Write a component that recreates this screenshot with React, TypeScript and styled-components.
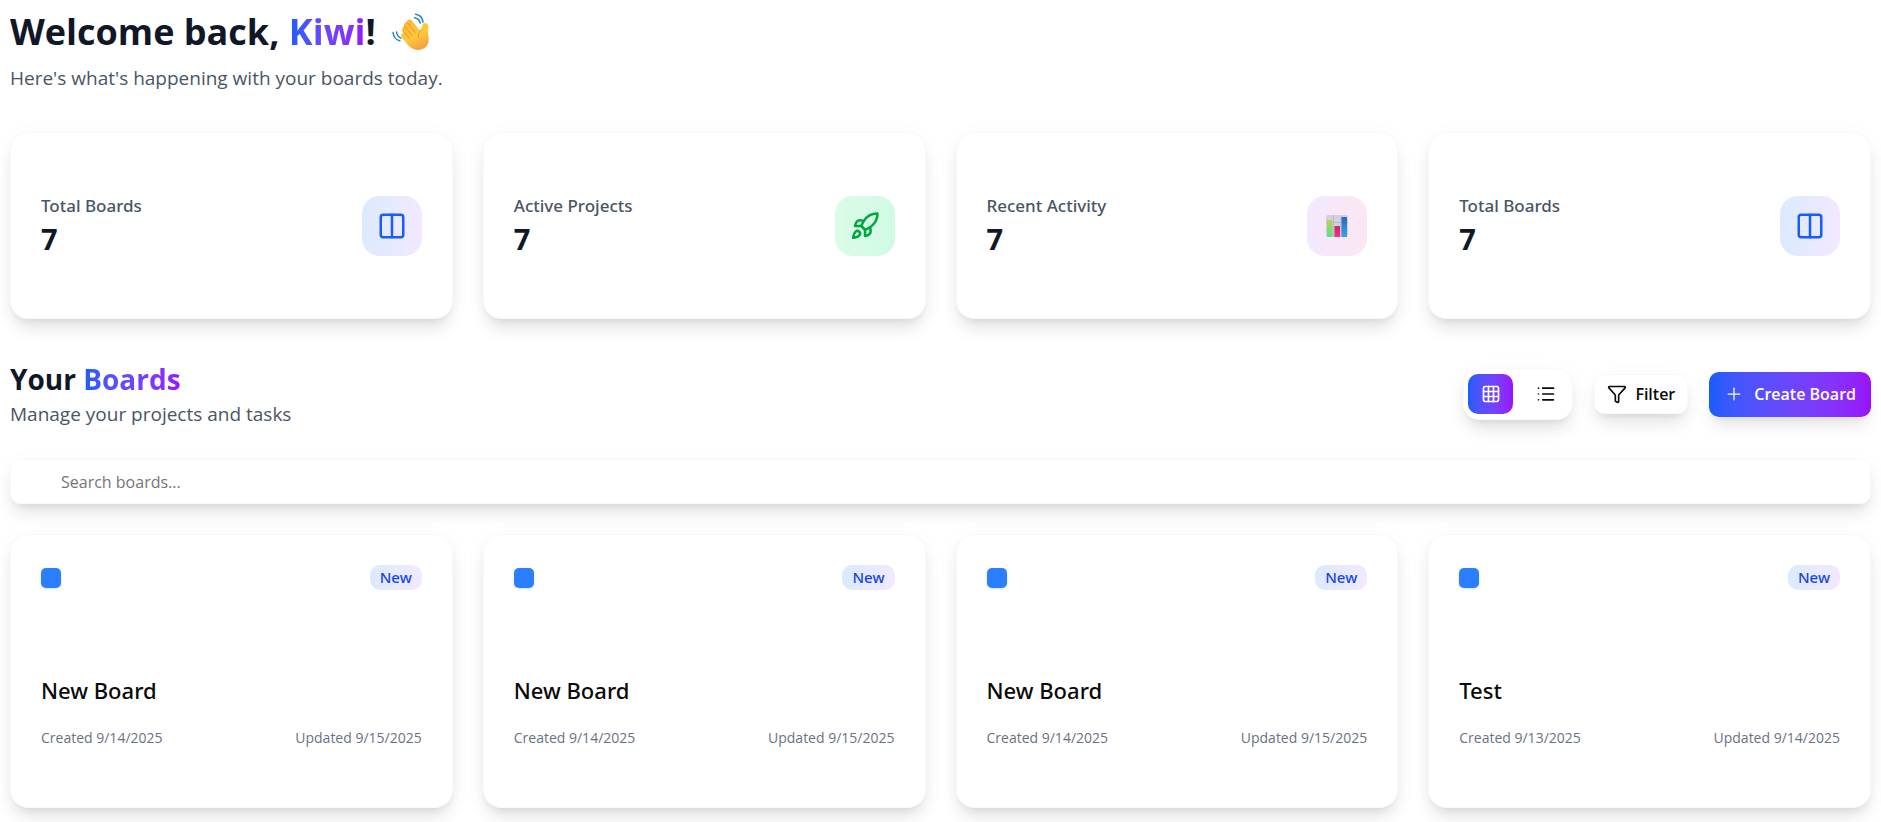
import React, { useState } from "react";
import styled, { createGlobalStyle, css } from "styled-components";
import { Columns2, Rocket, Grid3x3, List, Funnel, Plus } from "lucide-react";

const GlobalStyle = createGlobalStyle`
  *, *::before, *::after { box-sizing: border-box; }
  body {
    margin: 0;
    background: #ffffff;
    color: #0a0a0a;
    font-family: "Open Sans", "Noto Sans", sans-serif;
    font-size: 16px;
    line-height: 24px;
  }
  h1, h2, h3, p { margin: 0; }
  button, input { font: inherit; color: inherit; }
`;

const accent = "linear-gradient(90deg in oklab, #155dfc, #9810fa)";
const mediumFont = '"Noto Sans", "Open Sans", sans-serif';
const surface = css`
  background: #ffffff;
  border: 1px solid #f9f9f9;
  box-shadow: 0 12px 18px -4px rgba(0, 0, 0, 0.1), 0 5px 8px -5px rgba(0, 0, 0, 0.1),
    0 4px 24px rgba(0, 0, 0, 0.03);
`;

const Page = styled.main`
  display: flex;
  flex-direction: column;
  padding: 10px 10px 14px;
`;

const Welcome = styled.header`
  display: flex;
  flex-direction: column;
  gap: 9px;
  margin-bottom: 39px;
`;

const WelcomeTitle = styled.h1`
  display: flex;
  align-items: center;
  gap: 16px;
  font-size: 36px;
  line-height: 44px;
  font-weight: 700;
  color: #101828;
`;

const Gradient = styled.span`
  background: ${accent};
  background-clip: text;
  -webkit-background-clip: text;
  color: transparent;
`;

const Subtitle = styled.p`
  font-size: 19px;
  line-height: 30px;
  color: #4a5565;
`;

const CardGrid = styled.div`
  display: grid;
  grid-template-columns: repeat(4, minmax(0, 1fr));
  gap: 30px;
`;

const StatCard = styled.section`
  ${surface}
  display: flex;
  align-items: center;
  justify-content: space-between;
  padding: 60px 30px;
  border-radius: 18px;
`;

const StatLabel = styled.p`
  font-family: ${mediumFont};
  font-size: 17px;
  line-height: 26px;
  font-weight: 500;
  color: #4a5565;
`;

const StatValue = styled.p`
  font-size: 29px;
  line-height: 39px;
  font-weight: 700;
  color: #101828;
`;

const IconTile = styled.div<{ $from: string; $to: string; $color: string }>`
  display: grid;
  place-items: center;
  width: 60px;
  height: 60px;
  border-radius: 18px;
  background: linear-gradient(90deg, ${(p) => p.$from}, ${(p) => p.$to});
  color: ${(p) => p.$color};
`;

const BoardsHeader = styled.div`
  display: flex;
  align-items: center;
  justify-content: space-between;
  margin: 40px 0 30px;
`;

const SectionTitle = styled.h2`
  font-size: 28px;
  line-height: 40px;
  font-weight: 700;
  color: #101828;
`;

const Toolbar = styled.div`
  display: flex;
  align-items: center;
  gap: 21px;
`;

const ViewSwitch = styled.div`
  ${surface}
  display: flex;
  gap: 10px;
  padding: 5px 4px;
  border-radius: 16px;
`;

const ViewButton = styled.button<{ $active: boolean }>`
  display: grid;
  place-items: center;
  width: 45px;
  height: 40px;
  padding: 0;
  border: 0;
  border-radius: 10px;
  cursor: pointer;
  background: ${(p) => (p.$active ? accent : "transparent")};
  color: ${(p) => (p.$active ? "#ffffff" : "#0a0a0a")};
`;

const FilterButton = styled.button`
  ${surface}
  display: flex;
  align-items: center;
  gap: 8px;
  height: 40px;
  padding: 0 12px;
  border-radius: 10px;
  font-size: 16px;
  font-weight: 600;
  cursor: pointer;
`;

const CreateButton = styled.button`
  display: flex;
  align-items: center;
  gap: 10px;
  height: 45px;
  padding: 0 15px;
  border: 0;
  border-radius: 10px;
  background: ${accent};
  color: #ffffff;
  font-size: 16px;
  font-weight: 600;
  cursor: pointer;
  box-shadow: 0 12px 18px -4px rgba(0, 0, 0, 0.1), 0 5px 8px -5px rgba(0, 0, 0, 0.1);
`;

const SearchInput = styled.input`
  ${surface}
  width: 100%;
  height: 45px;
  margin-bottom: 30px;
  padding: 0 50px;
  border-radius: 10px;
  font-size: 16px;
  &::placeholder { color: #757575; opacity: 1; }
`;

const BoardCard = styled.article`
  ${surface}
  display: flex;
  flex-direction: column;
  padding: 30px 30px 57px;
  border-radius: 18px;
`;

const BoardTop = styled.div`
  display: flex;
  align-items: center;
  justify-content: space-between;
  margin-bottom: 84px;
`;

const Swatch = styled.span`
  width: 20px;
  height: 20px;
  border-radius: 5px;
  background: #2b7fff;
  box-shadow: 0 1px 3px rgba(0, 0, 0, 0.15);
`;

const Badge = styled.span`
  padding: 0 10px;
  border-radius: 10px;
  background: linear-gradient(90deg, #dbeafe, #f3e8ff);
  color: #1447e6;
  font-family: ${mediumFont};
  font-size: 15px;
  line-height: 25px;
  font-weight: 500;
`;

const BoardTitle = styled.h3`
  margin-bottom: 20px;
  font-family: ${mediumFont};
  font-size: 22px;
  line-height: 32px;
  font-weight: 500;
`;

const Dates = styled.div`
  display: flex;
  justify-content: space-between;
  font-size: 14px;
  line-height: 24px;
  color: #6a7282;
`;

function WavingHand() {
  return (
    <svg width="38" height="38" viewBox="0 0 38 38" fill="none" aria-hidden="true">
      <defs>
        <linearGradient id="skin" x1="14" y1="6" x2="30" y2="37" gradientUnits="userSpaceOnUse">
          <stop offset="0" stopColor="#ffb52e" />
          <stop offset="0.55" stopColor="#ffc83d" />
          <stop offset="1" stopColor="#f59a3c" />
        </linearGradient>
      </defs>
      <path
        d="M10.500 17.500 C9.800 15.800 10.500 14 12 13.200 C11.600 10.800 13 9.200 14.800 9.200 C14.800 6.800 18 5.400 20 7.800 L27 16.500 C28 17.300 29.300 17 29.600 15.700 L30.400 12 C31 9.300 34.800 9.300 36 12 C36.800 14 36 17 36 19.500 C36 22.500 37 24.500 36.600 28 C36 33.500 31.500 37 26 37 C21.500 37 18.300 34.800 15.500 31.500 L9.800 24.800 C8.400 22.800 9 20.600 10.800 20 Z"
        fill="url(#skin)"
      />
      <path
        d="M10.800 17.200 L17.500 25.500 M12.500 13.200 L20 22.500 M15.300 9.500 L23 19.200 M30 16.500 C27.500 18 26 20.500 26.500 24"
        stroke="#e8932a"
        strokeWidth="1"
        strokeLinecap="round"
      />
      <path
        d="M1 19.500c.5 4 3 7.300 6.800 8.300M4.600 19c.2 2.800 1.800 5 4.200 6.200M22.500 4.800c2.900.4 5 2.300 5.800 5.300M23.500 1.200c4.300.6 7 3.500 7.500 7.800"
        stroke="#2585c9"
        strokeWidth="1.500"
        strokeLinecap="round"
      />
    </svg>
  );
}

function BarChart() {
  return (
    <svg width="22" height="22" viewBox="0 0 22 22" aria-hidden="true">
      <defs>
        <linearGradient id="barGreen" x1="0" y1="0" x2="0" y2="1">
          <stop offset="0" stopColor="#b4d94c" />
          <stop offset="1" stopColor="#5be08c" />
        </linearGradient>
        <linearGradient id="barPink" x1="0" y1="0" x2="0" y2="1">
          <stop offset="0" stopColor="#c9256a" />
          <stop offset="1" stopColor="#f5317f" />
        </linearGradient>
        <linearGradient id="barBlue" x1="0" y1="0" x2="0" y2="1">
          <stop offset="0" stopColor="#2469c0" />
          <stop offset="1" stopColor="#3da2e8" />
        </linearGradient>
      </defs>
      <rect width="22" height="22" rx="2" fill="#d5cfe0" />
      <path d="M0 7.500h22M0 15h22M7.500 0v22M15 0v22" stroke="#bdb5cb" strokeWidth="1" />
      <rect x="1" y="5" width="5.500" height="17" rx="0.500" fill="url(#barGreen)" />
      <rect x="8.500" y="11" width="5.500" height="11" rx="0.500" fill="url(#barPink)" />
      <rect x="15.500" y="2" width="5.500" height="20" rx="0.500" fill="url(#barBlue)" />
    </svg>
  );
}

const blueTile = { from: "#dbeafe", to: "#f3e8ff", color: "#155dfc", icon: <Columns2 size={30} /> };
const stats = [
  { label: "Total Boards", value: 7, ...blueTile },
  { label: "Active Projects", value: 7, from: "#dcfce7", to: "#d0fae5", color: "#00a63e", icon: <Rocket size={30} /> },
  { label: "Recent Activity", value: 7, from: "#f3e8ff", to: "#fce7f3", color: "#9810fa", icon: <BarChart /> },
  { label: "Total Boards", value: 7, ...blueTile },
];

const boards = [
  { id: 1, title: "New Board", created: "9/14/2025", updated: "9/15/2025" },
  { id: 2, title: "New Board", created: "9/14/2025", updated: "9/15/2025" },
  { id: 3, title: "New Board", created: "9/14/2025", updated: "9/15/2025" },
  { id: 4, title: "Test", created: "9/13/2025", updated: "9/14/2025" },
];

export default function App() {
  const [view, setView] = useState<"grid" | "list">("grid");
  return (
    <>
      <GlobalStyle />
      <Page>
        <Welcome>
          <WelcomeTitle>
            <span>
              Welcome back, <Gradient>Kiwi</Gradient>!
            </span>
            <WavingHand />
          </WelcomeTitle>
          <Subtitle>Here's what's happening with your boards today.</Subtitle>
        </Welcome>

        <CardGrid>
          {stats.map((s, i) => (
            <StatCard key={i}>
              <div>
                <StatLabel>{s.label}</StatLabel>
                <StatValue>{s.value}</StatValue>
              </div>
              <IconTile $from={s.from} $to={s.to} $color={s.color}>
                {s.icon}
              </IconTile>
            </StatCard>
          ))}
        </CardGrid>

        <BoardsHeader>
          <div>
            <SectionTitle>
              Your <Gradient>Boards</Gradient>
            </SectionTitle>
            <Subtitle>Manage your projects and tasks</Subtitle>
          </div>
          <Toolbar>
            <ViewSwitch>
              <ViewButton type="button" aria-label="Grid view" $active={view === "grid"} onClick={() => setView("grid")}>
                <Grid3x3 size={20} />
              </ViewButton>
              <ViewButton type="button" aria-label="List view" $active={view === "list"} onClick={() => setView("list")}>
                <List size={20} />
              </ViewButton>
            </ViewSwitch>
            <FilterButton type="button">
              <Funnel size={20} />
              Filter
            </FilterButton>
            <CreateButton type="button">
              <Plus size={20} strokeWidth={1.5} />
              Create Board
            </CreateButton>
          </Toolbar>
        </BoardsHeader>

        <SearchInput type="search" aria-label="Search boards" placeholder="Search boards..." />

        <CardGrid>
          {boards.map((b) => (
            <BoardCard key={b.id}>
              <BoardTop>
                <Swatch />
                <Badge>New</Badge>
              </BoardTop>
              <BoardTitle>{b.title}</BoardTitle>
              <Dates>
                <span>Created {b.created}</span>
                <span>Updated {b.updated}</span>
              </Dates>
            </BoardCard>
          ))}
        </CardGrid>
      </Page>
    </>
  );
}
